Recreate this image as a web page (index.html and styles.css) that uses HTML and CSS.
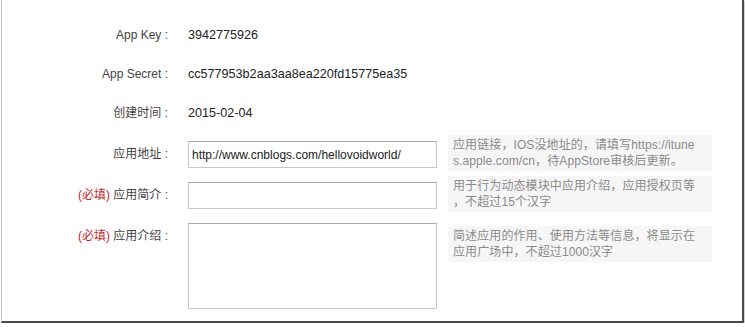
FILE: index.html
```html
<!DOCTYPE html>
<html lang="zh-CN">
<head>
    <meta charset="UTF-8">
    <meta name="viewport" content="width=device-width, initial-scale=1.0">
    <title>应用信息</title>
    <link rel="stylesheet" href="styles.css">
</head>
<body>
    <div class="window">
        <div class="form">
            <div class="row">
                <div class="label">App Key :</div>
                <div class="value">3942775926</div>
            </div>
            <div class="row">
                <div class="label">App Secret :</div>
                <div class="value">cc577953b2aa3aa8ea220fd15775ea35</div>
            </div>
            <div class="row row-last">
                <div class="label">创建时间 :</div>
                <div class="value">2015-02-04</div>
            </div>
            <div class="row row-field">
                <div class="label">应用地址 :</div>
                <input class="field" type="text" value="http://www.cnblogs.com/hellovoidworld/">
                <div class="hint hint-up">应用链接，IOS没地址的，请填写https://itune<br>s.apple.com/cn，待AppStore审核后更新。</div>
            </div>
            <div class="row row-field">
                <div class="label"><span class="required">(必填)</span> 应用简介 :</div>
                <input class="field" type="text">
                <div class="hint hint-up">用于行为动态模块中应用介绍，应用授权页等<br>，不超过15个汉字</div>
            </div>
            <div class="row row-field">
                <div class="label"><span class="required">(必填)</span> 应用介绍 :</div>
                <textarea class="field field-area"></textarea>
                <div class="hint hint-down">简述应用的作用、使用方法等信息，将显示在<br>应用广场中，不超过1000汉字</div>
            </div>
        </div>
    </div>
</body>
</html>
```

FILE: styles.css
```css
body {
    margin: 0;
    background: #fff;
    font-family: "Liberation Sans", "Noto Sans CJK SC", sans-serif;
    font-size: 12px;
    color: #333;
}
.window {
    box-sizing: border-box;
    width: 743px;
    height: 323px;
    margin-left: 1px;
    border-left: 1px solid #c4c4c4;
    border-right: 2px solid #4a4a4a;
    border-bottom: 2px solid #4a4a4a;
    box-shadow: 1px 1px 2px rgba(0,0,0,0.25);
}
.form {
    padding-top: 22px;
}
.row {
    display: flex;
    align-items: flex-start;
    margin-bottom: 12px;
}
.row-last,
.row-field {
    margin-bottom: 14px;
}
.label {
    width: 166px;
    padding-right: 2px;
    text-align: right;
    line-height: 27px;
    color: #444;
}
.required {
    color: #c8242b;
}
.value {
    margin-left: 18px;
    line-height: 27px;
    font-size: 12.6px;
    color: #222;
}
.field {
    box-sizing: border-box;
    width: 249px;
    height: 27px;
    margin: 0 0 0 18px;
    padding: 0 3px;
    border: 1px solid #c8c8c8;
    border-top-color: #aaa;
    font-family: "Liberation Sans", sans-serif;
    font-size: 12px;
    color: #222;
    outline: none;
    resize: none;
}
.field-area {
    height: 86px;
}
.hint {
    width: 254px;
    margin-left: 11px;
    padding: 2px 5px;
    background: #f6f6f6;
    color: #8a8a8a;
    line-height: 16px;
    letter-spacing: 0.1px;
}
.hint-up {
    margin-top: -6px;
    margin-bottom: -6px;
}
.hint-down {
    margin-top: 3px;
}
```
